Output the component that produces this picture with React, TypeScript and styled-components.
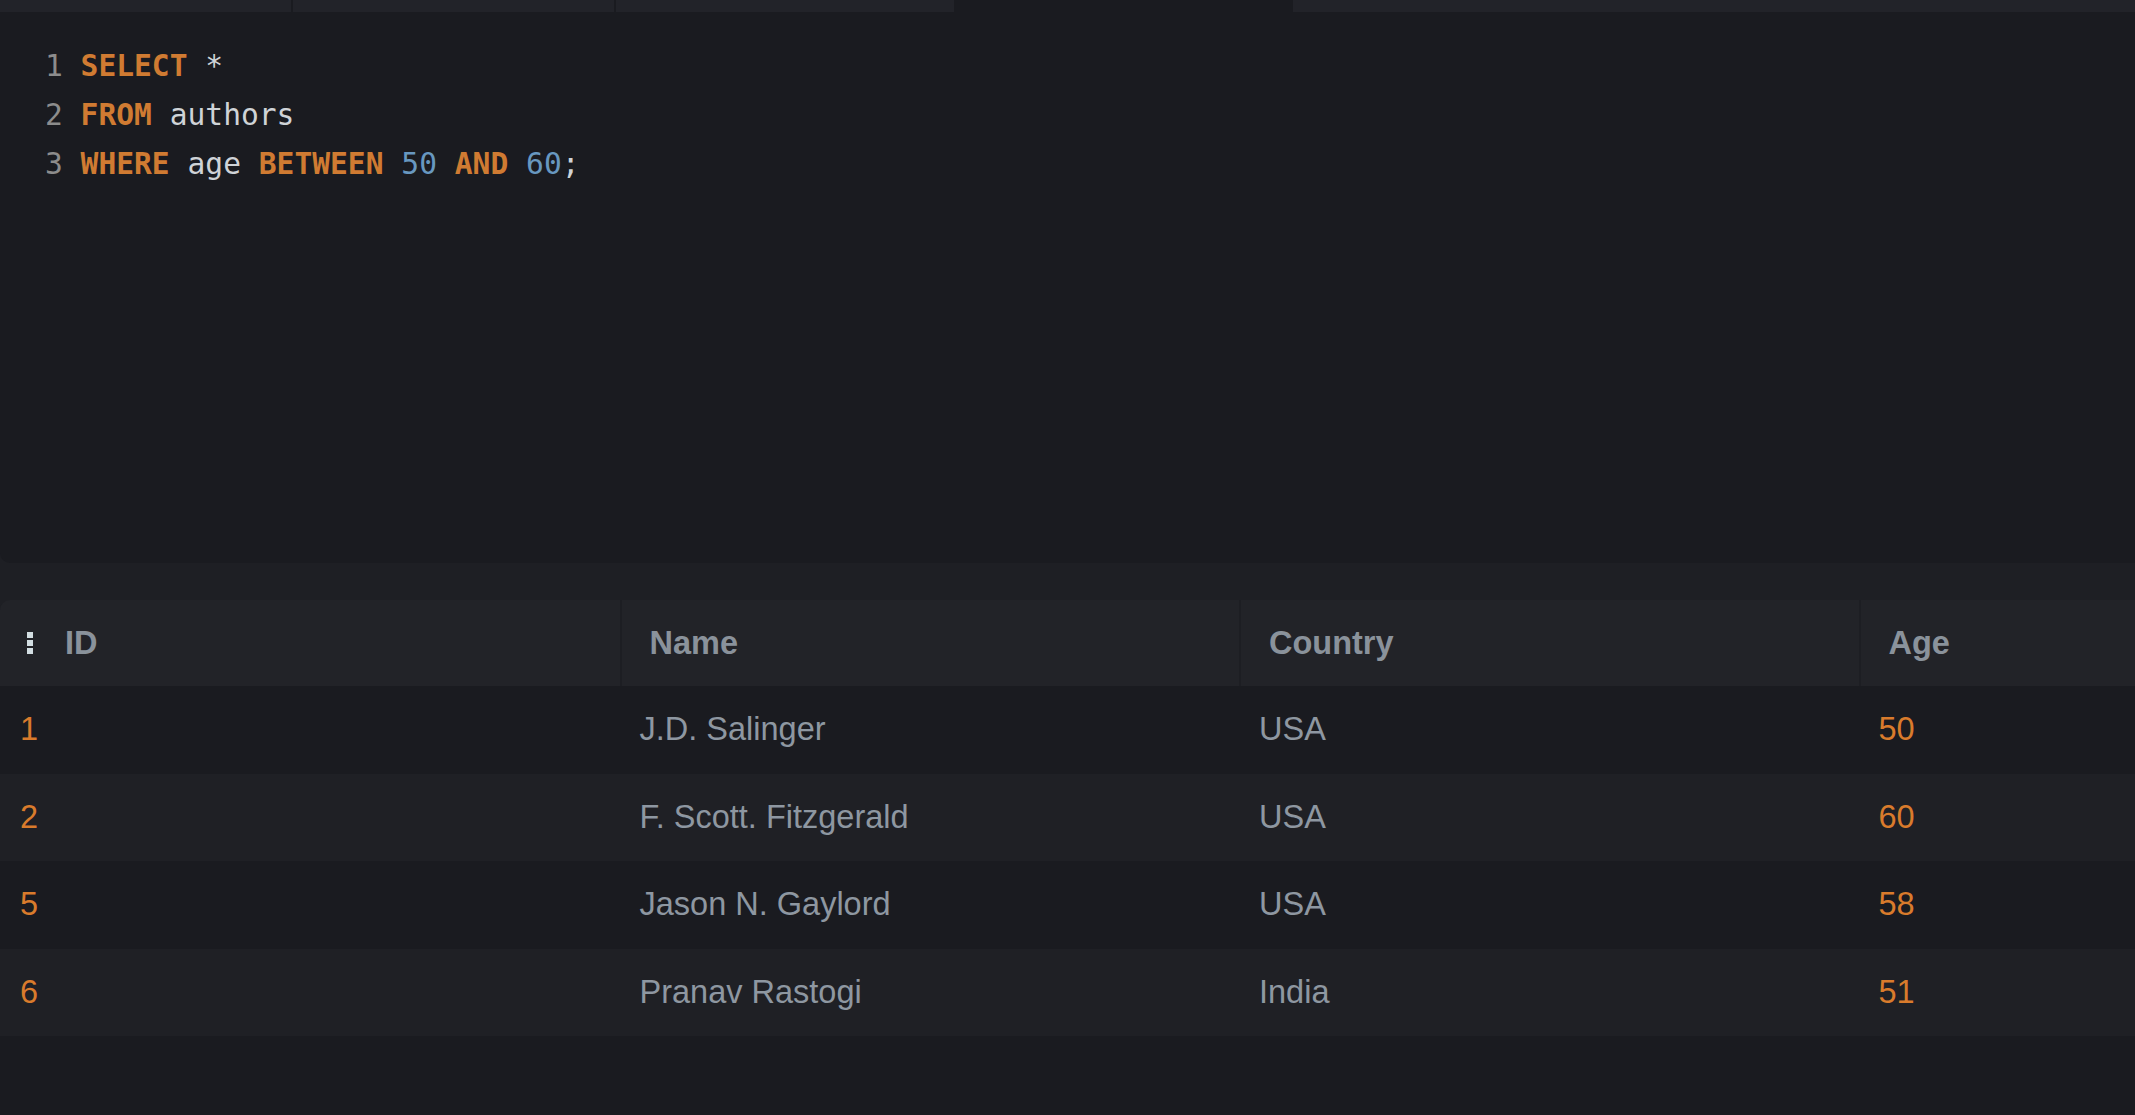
import React from "react";
import styled, { createGlobalStyle } from "styled-components";

const GlobalStyle = createGlobalStyle`
  html, body { margin: 0; padding: 0; background: #1a1b20; }
  #root { width: 2135px; height: 1115px; }
`;

const Page = styled.div`
  width: 2135px;
  height: 1115px;
  display: flex;
  flex-direction: column;
  overflow: hidden;
  background: #1a1b20;
`;

const TabBar = styled.div`
  height: 12px;
  display: flex;
  flex-shrink: 0;
  background: #1a1b20;
`;

const Tab = styled.div<{ $w?: number; $active?: boolean; $divider?: boolean }>`
  height: 100%;
  ${(p) => (p.$w ? `width: ${p.$w}px; flex-shrink: 0;` : `flex: 1;`)}
  background: ${(p) => (p.$active ? "#1a1b20" : "#222329")};
  border-right: ${(p) => (p.$divider ? "2px solid #1a1b20" : "none")};
`;

const Workspace = styled.div`
  display: flex;
  flex-direction: column;
  background: #1e1f24;
  flex-shrink: 0;
`;

const Editor = styled.div`
  height: 551px;
  box-sizing: border-box;
  padding-top: 30px;
  padding-left: 45px;
  background: #1a1b20;
  border-radius: 0 0 0 10px;
  font-family: "DejaVu Sans Mono", "Liberation Mono", monospace;
  font-size: 29.6px;
  line-height: 49px;
  color: #cfd3d7;
`;

const CodeLine = styled.div`
  display: block;
  white-space: pre;
`;

const LineNo = styled.span`
  display: inline-block;
  width: 17.8px;
  margin-right: 17.8px;
  color: #8c8c8c;
`;

const Kw = styled.span`
  color: #d07b32;
  font-weight: bold;
`;

const Num = styled.span`
  color: #6898c0;
`;

const Band = styled.div`
  height: 37px;
`;

const GRID = "repeat(4, 619.5px)";

const HeaderRow = styled.div`
  display: grid;
  grid-template-columns: ${GRID};
  height: 86px;
  background: #222328;
  border-top-left-radius: 10px;
`;

const HeaderCell = styled.div<{ $first?: boolean }>`
  display: flex;
  align-items: center;
  gap: 32px;
  box-sizing: border-box;
  padding-left: ${(p) => (p.$first ? "27px" : "28px")};
  border-left: ${(p) => (p.$first ? "none" : "2px solid #1d1e23")};
  font-family: "Liberation Sans", Arial, sans-serif;
  font-weight: bold;
  font-size: 32.5px;
  color: #8a929b;
`;

const Body = styled.div`
  background: #1a1b20;
`;

const Row = styled.div<{ $alt?: boolean }>`
  display: grid;
  grid-template-columns: ${GRID};
  height: 87.5px;
  background: ${(p) => (p.$alt ? "#1f2025" : "#1a1b20")};
`;

const Cell = styled.div<{ $accent?: boolean }>`
  display: flex;
  align-items: center;
  padding-left: 20px;
  font-family: "Liberation Sans", Arial, sans-serif;
  font-size: 32.5px;
  color: ${(p) => (p.$accent ? "#d97b2c" : "#8e97a1")};
`;

const Rest = styled.div`
  flex: 1;
  background: #1a1b20;
`;

const DotsIcon = () => (
  <svg width="6" height="22" viewBox="0 0 6 22" aria-hidden="true">
    <rect x="0" y="0" width="6" height="6" fill="#d3dee2" />
    <rect x="0" y="8" width="6" height="6" fill="#d3dee2" />
    <rect x="0" y="16" width="6" height="6" fill="#d3dee2" />
  </svg>
);

const rows = [
  { id: "1", name: "J.D. Salinger", country: "USA", age: "50" },
  { id: "2", name: "F. Scott. Fitzgerald", country: "USA", age: "60" },
  { id: "5", name: "Jason N. Gaylord", country: "USA", age: "58" },
  { id: "6", name: "Pranav Rastogi", country: "India", age: "51" },
];

export default function App() {
  return (
    <>
      <GlobalStyle />
      <Page>
        <TabBar>
          <Tab $w={291} $divider />
          <Tab $w={321} $divider />
          <Tab $w={338} />
          <Tab $w={339} $active />
          <Tab />
        </TabBar>
        <Workspace>
          <Editor>
            <CodeLine>
              <LineNo>1</LineNo>
              <Kw>SELECT</Kw>{" *"}
            </CodeLine>
            <CodeLine>
              <LineNo>2</LineNo>
              <Kw>FROM</Kw>{" authors"}
            </CodeLine>
            <CodeLine>
              <LineNo>3</LineNo>
              <Kw>WHERE</Kw>{" age "}<Kw>BETWEEN</Kw>{" "}<Num>50</Num>{" "}<Kw>AND</Kw>{" "}<Num>60</Num>;
            </CodeLine>
          </Editor>
          <Band />
          <HeaderRow>
            <HeaderCell $first>
              <DotsIcon />
              ID
            </HeaderCell>
            <HeaderCell>Name</HeaderCell>
            <HeaderCell>Country</HeaderCell>
            <HeaderCell>Age</HeaderCell>
          </HeaderRow>
        </Workspace>
        <Body>
          {rows.map((r, i) => (
            <Row key={r.id} $alt={i % 2 === 1}>
              <Cell $accent>{r.id}</Cell>
              <Cell>{r.name}</Cell>
              <Cell>{r.country}</Cell>
              <Cell $accent>{r.age}</Cell>
            </Row>
          ))}
        </Body>
        <Rest />
      </Page>
    </>
  );
}
